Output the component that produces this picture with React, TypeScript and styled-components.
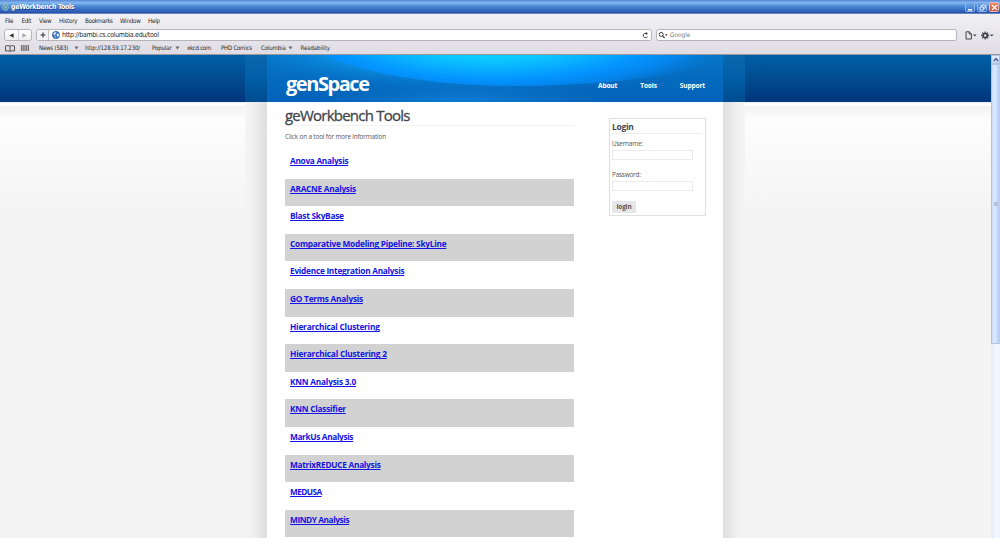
import React from "react";
import styled, { createGlobalStyle } from "styled-components";

const GlobalStyle = createGlobalStyle`
  * { box-sizing: border-box; }
  body { margin: 0; overflow: hidden; background: #f4f4f4; }
  h1, h2, p, ul { margin: 0; padding: 0; font-weight: normal; }
`;

const uiFont = `"DejaVu Sans Condensed", "DejaVu Sans", sans-serif`;
const pageFont = `"Open Sans", "Noto Sans", sans-serif`;

const Browser = styled.div`
  width: 1000px;
  height: 538px;
  display: flex;
  flex-direction: column;
  overflow: hidden;
  font-family: ${uiFont};
`;

const TitleBar = styled.header`
  height: 14px;
  flex: none;
  display: flex;
  align-items: center;
  padding: 0 1px 0 2px;
  background: linear-gradient(#6c93dc 0, #5c8ad8 1px, #80b8ee 2px, #74aee8 4px, #5a96dc 5px, #3f7acc 8px, #3262bc 11px, #2850a8 13px, #a9b6d2 14px);
`;

const WindowTitle = styled.span`
  flex: 1;
  margin-left: 2px;
  color: #fff;
  font-size: 7px;
  line-height: 13px;
  font-weight: bold;
  letter-spacing: -0.32px;
  text-shadow: 0.5px 0.5px 0 #1b3f88;
`;

const WindowButton = styled.span<{ $close?: boolean }>`
  width: 10px;
  height: 10px;
  margin: 0 0 1px 2px;
  border-radius: 1.5px;
  border: 0.5px solid ${(p) => (p.$close ? "#f0b8a8" : "#8db4e8")};
  background: ${(p) => (p.$close ? "linear-gradient(#e88a6c, #d4502c)" : "linear-gradient(#6fa8e6, #3a78cc)")};
  display: flex;
`;

const Chrome = styled.div`
  height: 41px;
  flex: none;
  background: linear-gradient(#f1f0f4, #dfdde3);
  border-bottom: 1px solid #97979c;
  color: #2a2a2c;
`;

const MenuBar = styled.nav`
  height: 13px;
  padding-left: 5px;
  display: flex;
  align-items: center;
`;

const MenuItem = styled.span<{ $width: number; $spacing?: number }>`
  width: ${(p) => p.$width}px;
  flex: none;
  font-size: 6.2px;
  line-height: 10px;
  white-space: nowrap;
  letter-spacing: ${(p) => p.$spacing ?? -0.3}px;
`;

const AddressRow = styled.div`
  height: 15px;
  padding: 2px 6px 1px 4px;
  display: flex;
  align-items: center;
`;

const Box = styled.div<{ $width: number; $gap?: number; $white?: boolean }>`
  width: ${(p) => p.$width}px;
  height: 12px;
  margin-right: ${(p) => p.$gap ?? 0}px;
  flex: none;
  display: flex;
  align-items: center;
  border: 1px solid #b4b3b9;
  border-radius: 2.5px;
  background: ${(p) => (p.$white ? "#fff" : "linear-gradient(#fff, #eeedf1)")};
  overflow: hidden;
`;

const NavHalf = styled.div<{ $divided?: boolean }>`
  flex: 1;
  height: 100%;
  display: flex;
  align-items: center;
  justify-content: center;
  border-left: ${(p) => (p.$divided ? "0.5px solid #cfced4" : "0")};
`;

const PlusCell = styled.div`
  width: 12px;
  height: 100%;
  margin-right: 3px;
  display: flex;
  align-items: center;
  justify-content: center;
  background: #f3f2f6;
  border-right: 1px solid #c4c3c9;
`;

const Address = styled.span`
  flex: 1;
  padding-left: 2px;
  font-size: 7px;
  line-height: 10px;
  letter-spacing: -0.3px;
`;

const ReloadIcon = styled.svg`
  margin-right: 2px;
`;

const SearchHint = styled.span`
  padding-left: 2px;
  font-size: 6.4px;
  line-height: 10px;
  color: #77777b;
`;

const ToolIcons = styled.div`
  display: flex;
  gap: 4px;
  margin-left: auto;
`;

const BookmarkBar = styled.div`
  height: 12px;
  padding-left: 5px;
  display: flex;
  align-items: center;
`;

const BookmarkIcons = styled.div`
  width: 34px;
  flex: none;
  display: flex;
  gap: 6px;
  align-items: center;
`;

const Bookmark = styled(MenuItem)`
  display: flex;
  align-items: center;
  font-size: 6.1px;
`;

const BookmarkName = styled.span<{ $width: number }>`
  width: ${(p) => p.$width}px;
`;

const Viewport = styled.div`
  flex: 1;
  min-height: 0;
  display: flex;
`;

const Page = styled.div`
  width: 991px;
  display: flex;
  padding-left: 245px;
  background: linear-gradient(
    #005fa8 0, #004f94 20px, #00367c 46px, #00367c 46.5px, #d4dce8 47px, #fff 48px, #fff 50.5px,
    #f1f1f1 51px, #f7f7f7 57px, #fdfdfd 65px, #fbfbfb 85px, #f7f7f7 125px, #f4f4f4 155px, #f4f4f4 100%
  );
`;

const Shade = styled.div<{ $right?: boolean }>`
  width: 22px;
  display: flex;
  flex-direction: column;
  background: linear-gradient(${(p) => (p.$right ? "to left" : "to right")}, #f5f5f5, #efefef 40%, #dedede);
`;

const ShadeTop = styled.div`
  height: 47px;
  background: linear-gradient(#0b66ad, #0060a8 45%, #004b90);
`;

const Content = styled.div`
  width: 456px;
  display: flex;
  flex-direction: column;
  background: #fff;
  font-family: ${pageFont};
`;

const Banner = styled.div`
  height: 47px;
  flex: none;
  display: grid;
  > * { grid-area: 1 / 1; }
`;

const BannerRow = styled.div`
  z-index: 1;
  display: flex;
  justify-content: space-between;
  padding: 0 18px 0 19px;
`;

const Logo = styled.div`
  padding-top: 16px;
  color: #fff;
  font-size: 20px;
  line-height: 25px;
  font-weight: 700;
  letter-spacing: -1.45px;
`;

const SiteNav = styled.nav`
  display: flex;
  gap: 23px;
  padding-top: 25.5px;
`;

const SiteLink = styled.span`
  color: #fff;
  font-size: 6.6px;
  line-height: 10px;
  font-weight: 700;
  letter-spacing: -0.15px;
`;

const Body = styled.div`
  display: flex;
  padding-left: 18px;
`;

const Main = styled.main`
  width: 289px;
`;

const PageTitle = styled.h1`
  height: 24px;
  border-bottom: 1px solid #f2f2f2;
  padding-top: 3px;
  color: #3f454c;
  font-size: 15px;
  line-height: 20px;
  letter-spacing: -0.78px;
  -webkit-text-stroke: 0.3px #3f454c;
`;

const Intro = styled.p`
  height: 25px;
  padding-top: 5.5px;
  color: #555;
  font-size: 6.4px;
  line-height: 10px;
  letter-spacing: -0.15px;
`;

const ToolList = styled.ul`
  list-style: none;
`;

const ToolRow = styled.li`
  height: 27.6px;
  display: flex;
  align-items: flex-start;
  padding: 4px 0 0 5px;
  &:nth-child(even) { background: #d2d2d2; }
`;

const ToolLink = styled.a<{ $spacing: number }>`
  color: #1414e6;
  font-size: 8.3px;
  line-height: 12px;
  font-weight: 700;
  text-decoration: underline;
  text-decoration-thickness: 1px;
  text-underline-offset: 1px;
  text-decoration-skip-ink: none;
  letter-spacing: ${(p) => p.$spacing}px;
`;

const LoginPanel = styled.form`
  width: 97px;
  height: 98px;
  margin: 16px 0 0 35px;
  padding: 2px 3px 0 2px;
  border: 1px solid #dfdfdf;
  color: #555;
  font-size: 6.4px;
`;

const LoginTitle = styled.h2`
  height: 13px;
  border-bottom: 1px solid #eee;
  color: #3f454c;
  font-size: 8.4px;
  line-height: 11px;
  font-weight: 700;
  letter-spacing: -0.25px;
`;

const Label = styled.label<{ $top: number }>`
  display: block;
  padding-top: ${(p) => p.$top}px;
  line-height: 10px;
  letter-spacing: -0.2px;
`;

const Field = styled.div`
  width: 81px;
  height: 10.5px;
  border: 1px solid #ebebeb;
  margin-top: 0.5px;
`;

const LoginButton = styled.div`
  width: 24px;
  height: 12px;
  margin-top: 10px;
  background: #e6e6ea;
  color: #555;
  font-size: 6.4px;
  line-height: 11px;
  font-weight: 700;
  text-align: center;
  letter-spacing: -0.15px;
`;

const ScrollTrack = styled.div`
  width: 9px;
  background: linear-gradient(to right, #dfeafc, #f4f8ff 60%, #eef3fd);
`;

const ScrollUp = styled.div`
  height: 9px;
  display: flex;
  align-items: center;
  justify-content: center;
  border: 0.5px solid #b4c4e0;
  background: linear-gradient(#e4eeff, #bfd2f5);
`;

const ScrollThumb = styled.div`
  height: 280px;
  display: flex;
  align-items: center;
  justify-content: center;
  border: 1px solid #b3c3de;
  border-right-color: #c2cde2;
  background: linear-gradient(to right, #c9dcfb, #dceaff 45%, #b4cdf4);
`;

const ScrollGrip = styled.div`
  width: 4px;
  height: 4px;
  background: #b3c0d6;
`;

const DownArrow = () => (
  <svg width="5" height="4" viewBox="0 0 5 4"><path d="M0.4 0.4h4.2L2.5 3.600z" fill="#6a6a6e" /></svg>
);

const Globe = ({ size }: { size: number }) => (
  <svg width={size} height={size} viewBox="0 0 16 16">
    <circle cx="8" cy="8" r="7.4" fill="#3c78c0" stroke="#28558e" />
    <path d="M2.5 4.5 7 2l2 2-3 2.5 1 3-3-1zM9.5 6l4-1 1 3-2.5 4-2-1.5zM5 11l3 1-1 2.5z" fill="#d6eafa" />
  </svg>
);

const AppIcon = () => (
  <svg width="7" height="8" viewBox="0 0 14 16">
    <path d="M3 4 7 1l4 3" fill="none" stroke="#c9b48a" strokeWidth="1.6" />
    <circle cx="7" cy="9" r="5.8" fill="#4f93ad" stroke="#b4cbd6" strokeWidth="1.4" />
    <path d="M4 8l3-2 3 2-2 4z" fill="#8fc4cf" />
  </svg>
);

const bookmarks: { name: string; width: number; nameWidth: number; menu?: boolean; spacing: number }[] = [
  { name: "News (583)", width: 46, nameWidth: 35, menu: true, spacing: -0.2 },
  { name: "http://128.59.17.230/", width: 67, nameWidth: 60, spacing: -0.18 },
  { name: "Popular", width: 35, nameWidth: 22.5, menu: true, spacing: -0.15 },
  { name: "xkcd.com", width: 34, nameWidth: 30, spacing: -0.3 },
  { name: "PHD Comics", width: 40, nameWidth: 36, spacing: -0.25 },
  { name: "Columbia", width: 39.5, nameWidth: 26.5, menu: true, spacing: -0.15 },
  { name: "Readability", width: 36, nameWidth: 36, spacing: -0.1 },
];

const menus: [string, number, number][] = [
  ["File", 16.5, -0.25], ["Edit", 17.5, -0.25], ["View", 20, -0.25], ["History", 26, -0.2],
  ["Bookmarks", 35, -0.4], ["Window", 28, -0.25], ["Help", 16, -0.2],
];

const tools: [string, number][] = [
  ["Anova Analysis", -0.3], ["ARACNE Analysis", -0.28], ["Blast SkyBase", -0.26],
  ["Comparative Modeling Pipeline: SkyLine", -0.25], ["Evidence Integration Analysis", -0.27],
  ["GO Terms Analysis", -0.23], ["Hierarchical Clustering", -0.23], ["Hierarchical Clustering 2", -0.2],
  ["KNN Analysis 3.0", -0.21], ["KNN Classifier", -0.24], ["MarkUs Analysis", -0.36],
  ["MatrixREDUCE Analysis", -0.28], ["MEDUSA", -0.6], ["MINDY Analysis", -0.42],
];

const BannerArt = () => (
  <svg width="456" height="47" viewBox="0 0 456 47">
    <defs>
      <linearGradient id="base" x1="0" y1="0" x2="0" y2="1">
        <stop offset="0" stopColor="#0674c4" /><stop offset="1" stopColor="#0462b8" />
      </linearGradient>
      <radialGradient id="halo" cx="0" cy="0" r="1" gradientUnits="userSpaceOnUse" gradientTransform="translate(205 -8) scale(250 46)">
        <stop offset="0" stopColor="#0cb4fa" /><stop offset="0.5" stopColor="#0c9cf2" /><stop offset="1" stopColor="#0674cc" stopOpacity="0" />
      </radialGradient>
      <radialGradient id="floor" cx="0" cy="0" r="1" gradientUnits="userSpaceOnUse" gradientTransform="translate(195 50) scale(150 26)">
        <stop offset="0" stopColor="#0a80d8" /><stop offset="1" stopColor="#0a78d0" stopOpacity="0" />
      </radialGradient>
      <radialGradient id="glow" cx="0" cy="0" r="1" gradientUnits="userSpaceOnUse" gradientTransform="translate(225 -18) scale(250 64)">
        <stop offset="0" stopColor="#10d8ff" /><stop offset="0.34" stopColor="#0ccaff" /><stop offset="0.66" stopColor="#0494ff" />
        <stop offset="0.8" stopColor="#0488f4" stopOpacity="0.8" /><stop offset="1" stopColor="#0674d0" stopOpacity="0" />
      </radialGradient>
    </defs>
    <rect width="456" height="47" fill="url(#base)" />
    <rect width="456" height="47" fill="url(#halo)" />
    <rect width="456" height="47" fill="url(#floor)" />
    <path d="M55 0C100 18 160 30 240 31C320 31 400 24 456 8V0z" fill="url(#glow)" />
  </svg>
);

export default function App() {
  return (
    <Browser>
      <GlobalStyle />
      <TitleBar>
        <AppIcon />
        <WindowTitle>geWorkbench Tools</WindowTitle>
        <WindowButton>
          <svg width="9" height="9"><path d="M2 6.8h4" stroke="#fff" strokeWidth="1.6" /></svg>
        </WindowButton>
        <WindowButton>
          <svg width="9" height="9" fill="none" stroke="#fff" strokeWidth=".8"><path d="M3.8 3.8V2h3.400v3.200H5.600M2 4h3.400v3H2z" /></svg>
        </WindowButton>
        <WindowButton $close>
          <svg width="9" height="9"><path d="M2 2l5 5M7 2 2 7" stroke="#fff" strokeWidth="1.3" /></svg>
        </WindowButton>
      </TitleBar>
      <Chrome>
        <MenuBar>
          {menus.map(([name, width, spacing]) => (
            <MenuItem key={name} $width={width} $spacing={spacing}>{name}</MenuItem>
          ))}
        </MenuBar>
        <AddressRow>
          <Box $width={28} $gap={4}>
            <NavHalf><svg width="5" height="5"><path d="M4.6.2v4.600L.4 2.500z" fill="#333" /></svg></NavHalf>
            <NavHalf $divided><svg width="5" height="5"><path d="M.4.2v4.600l4.200-2.300z" fill="#aaa" /></svg></NavHalf>
          </Box>
          <Box $width={616} $gap={4} $white>
            <PlusCell><svg width="6" height="6"><path d="M3 .5v5M.5 3h5" stroke="#333" strokeWidth="1.1" /></svg></PlusCell>
            <Globe size={8} />
            <Address>http://bambi.cs.columbia.edu/tool</Address>
            <ReloadIcon width="7" height="7" viewBox="0 0 7 7"><path d="M5.500 4.400A2.200 2.200 0 1 1 4.200 1.500" fill="none" stroke="#444" /><path d="M3.700 0 6.100 1.400 4 3z" fill="#444" /></ReloadIcon>
          </Box>
          <Box $width={301} $white>
            <svg width="11" height="8" viewBox="0 0 11 8"><circle cx="4.2" cy="3.4" r="2" fill="none" stroke="#444" /><path d="m5.600 4.800 2 2.200" stroke="#444" strokeWidth="1.2" /><path d="M7.800 3.300h3L9.300 5z" fill="#444" /></svg>
            <SearchHint>Google</SearchHint>
          </Box>
          <ToolIcons>
            <svg width="12" height="9" viewBox="0 0 12 9"><path d="M1 .8h3.300L6.400 3v5H1zM4.200.8V3h2.200" fill="none" stroke="#444" /><path d="M8 3.400h3.600L9.800 5.600z" fill="#444" /></svg>
            <svg width="13" height="9" viewBox="0 0 13 9"><circle cx="4.2" cy="4.5" r="2.1" fill="none" stroke="#3f3f46" strokeWidth="1.7" /><path d="M4.200.4v1.400M4.200 7.200v1.400M.1 4.500h1.400M6.900 4.500h1.400M1.300 1.600l1 1M6.100 6.400l1 1M7.100 1.600l-1 1M2.300 6.400l-1 1" stroke="#3f3f46" strokeWidth="1.3" /><path d="M9 3.400h3.600l-1.800 2.200z" fill="#444" /></svg>
          </ToolIcons>
        </AddressRow>
        <BookmarkBar>
          <BookmarkIcons>
            <svg width="10" height="7" viewBox="0 0 10 7"><path d="M.5 1Q3 0 5 1.200 7 0 9.500 1V6Q7 5.400 5 6.300 3 5.400.5 6zM5 1.200V6" fill="none" stroke="#444" strokeWidth=".9" /></svg>
            <svg width="9" height="6" viewBox="0 0 9 6"><path d="M0 1h8.200M0 3h8.200M0 5h8.200" stroke="#444" strokeWidth="1.400" strokeDasharray="1.400 .8" /></svg>
          </BookmarkIcons>
          {bookmarks.map((b) => (
            <Bookmark key={b.name} $width={b.width} $spacing={b.spacing}>
              <BookmarkName $width={b.nameWidth}>{b.name}</BookmarkName>
              {b.menu && <DownArrow />}
            </Bookmark>
          ))}
        </BookmarkBar>
      </Chrome>
      <Viewport>
        <Page>
          <Shade><ShadeTop /></Shade>
          <Content>
            <Banner>
              <BannerArt />
              <BannerRow>
                <Logo>genSpace</Logo>
                <SiteNav>
                  <SiteLink>About</SiteLink>
                  <SiteLink>Tools</SiteLink>
                  <SiteLink>Support</SiteLink>
                </SiteNav>
              </BannerRow>
            </Banner>
            <Body>
              <Main>
                <PageTitle>geWorkbench Tools</PageTitle>
                <Intro>Click on a tool for more information</Intro>
                <ToolList>
                  {tools.map(([name, spacing]) => (
                    <ToolRow key={name}><ToolLink $spacing={spacing}>{name}</ToolLink></ToolRow>
                  ))}
                </ToolList>
              </Main>
              <LoginPanel>
                <LoginTitle>Login</LoginTitle>
                <Label $top={5}>Username:</Label>
                <Field />
                <Label $top={10}>Password:</Label>
                <Field />
                <LoginButton>login</LoginButton>
              </LoginPanel>
            </Body>
          </Content>
          <Shade $right><ShadeTop /></Shade>
        </Page>
        <ScrollTrack>
          <ScrollUp><svg width="6" height="5"><path d="M.8 4 3 1.600 5.200 4" fill="none" stroke="#4d6185" strokeWidth="1.400" /></svg></ScrollUp>
          <ScrollThumb><ScrollGrip /></ScrollThumb>
        </ScrollTrack>
      </Viewport>
    </Browser>
  );
}
